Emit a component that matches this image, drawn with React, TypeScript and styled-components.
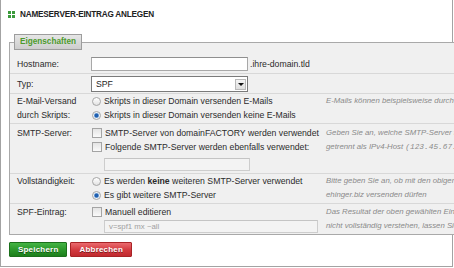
import React from "react";
import styled, { createGlobalStyle } from "styled-components";

const Global = createGlobalStyle`
  html, body { margin: 0; padding: 0; background: #fff; overflow: hidden; }
  body {
    width: 454px; height: 268px;
    font-family: "Liberation Sans", Arial, sans-serif;
    color: #2b2b2b;
  }
`;

const Page = styled.div`
  box-sizing: border-box;
  width: 453px;
  height: 267px;
  border: 1px solid #a3a3a3;
  border-top: none;
  display: flex;
  flex-direction: column;
`;

const Header = styled.div`
  display: flex;
  align-items: center;
  gap: 5px;
  height: 12px;
  margin: 8px 0 0 7px;
`;

const Icon = styled.span`
  display: grid;
  grid-template-columns: 3px 3px;
  grid-template-rows: 3px 3px;
  gap: 1px;
  & > i { background: #3b9a3b; display: block; }
`;

const Title = styled.h1`
  margin: 0;
  font-size: 8.2px;
  font-weight: bold;
  color: #222;
  letter-spacing: -0.2px;
  white-space: nowrap;
`;

const Fieldset = styled.section`
  position: relative;
  box-sizing: border-box;
  margin: 22px 0 0 8px;
  width: 480px;
  border: 1px solid #a9a9a9;
  background: #f0f0f0;
  padding-top: 8px;
`;

const Legend = styled.div`
  position: absolute;
  top: -9px;
  left: 4px;
  box-sizing: border-box;
  height: 16px;
  padding: 0 5px;
  border: 1px solid #9d9d9d;
  background: linear-gradient(#e6e6e6, #cdcdcd);
  color: #4c9a2c;
  font-size: 8.2px;
  font-weight: bold;
  line-height: 14px;
`;

const Row = styled.div<{ $pad?: string; $center?: boolean }>`
  display: grid;
  grid-template-columns: 74px 235px 1fr;
  align-items: ${(p) => (p.$center ? "center" : "start")};
  padding: ${(p) => p.$pad ?? "1px 0"};
  padding-left: 7px;
  border-bottom: 1px solid #d8d8d8;
  font-size: 8.7px;
  line-height: 14px;
  &:last-child { border-bottom: none; }
`;

const Label = styled.div`
  color: #2b2b2b;
  white-space: nowrap;
`;

const Control = styled.div`
  display: flex;
  flex-direction: column;
`;

const Inline = styled.div`
  display: flex;
  align-items: center;
`;

const TextInput = styled.div<{ $w: number; $disabled?: boolean }>`
  box-sizing: border-box;
  width: ${(p) => p.$w}px;
  height: ${(p) => (p.$disabled ? 13 : 14)}px;
  border: 1px solid ${(p) => (p.$disabled ? "#cdcdcd" : "#a8a8a8")};
  border-top-color: ${(p) => (p.$disabled ? "#c4c4c4" : "#8f8f8f")};
  background: ${(p) => (p.$disabled ? "#f3f3f3" : "#fff")};
  color: #a0a0a0;
  font-size: 7.8px;
  line-height: 11px;
  padding-left: 4px;
`;

const Suffix = styled.span`
  margin-left: 2px;
`;

const Select = styled.div`
  box-sizing: border-box;
  width: 157px;
  height: 16px;
  border: 1px solid #7a7a7a;
  background: #fff;
  display: flex;
  align-items: center;
  justify-content: space-between;
  padding: 0 1px 0 4px;
  color: #1d1d1d;
`;

const ArrowBtn = styled.span`
  box-sizing: border-box;
  width: 11px;
  height: 11px;
  border: 1px solid #b9b9b9;
  background: linear-gradient(#f4f4f4, #dedede);
  display: flex;
  align-items: center;
  justify-content: center;
  &::after {
    content: "";
    border-left: 3px solid transparent;
    border-right: 3px solid transparent;
    border-top: 3px solid #111;
  }
`;

const Option = styled.label`
  display: flex;
  align-items: center;
  gap: 3px;
  height: 14px;
  white-space: nowrap;
  padding-left: 1px;
`;

const Radio = styled.span<{ $on?: boolean }>`
  box-sizing: border-box;
  width: 9px;
  height: 9px;
  border-radius: 50%;
  border: 1px solid #a6a6a6;
  background: ${(p) =>
    p.$on
      ? "radial-gradient(circle, #1f5fb0 0 1.6px, #7fa9d9 2.2px, #eef2f7 3px)"
      : "linear-gradient(#ffffff, #e2e2e2)"};
`;

const Check = styled.span`
  box-sizing: border-box;
  width: 10px;
  height: 10px;
  border: 1px solid #a4a4a4;
  background: linear-gradient(#e4e4e4, #fafafa);
`;

const Indented = styled.div<{ $mt: number }>`
  margin: ${(p) => p.$mt}px 0 0 13px;
`;

const Help = styled.div`
  font-size: 7.8px;
  font-style: italic;
  color: #8a8a8a;
  white-space: nowrap;
  line-height: 14px;
  & code {
    font-family: "Liberation Mono", monospace;
    font-style: italic;
    font-size: 7.8px;
  }
`;

const Buttons = styled.div`
  display: flex;
  gap: 3px;
  margin: 7px 0 0 8px;
`;

const Button = styled.button<{ $tone: "green" | "red" }>`
  box-sizing: border-box;
  height: 15px;
  padding: 0 8px;
  border: 1px solid ${(p) => (p.$tone === "green" ? "#1b701b" : "#a82326")};
  border-radius: 1px;
  background: ${(p) =>
    p.$tone === "green"
      ? "linear-gradient(#44b444, #2a962a 55%, #1b7f1b)"
      : "linear-gradient(#ea6a6e, #d2393e 55%, #c02a2f)"};
  color: #fff;
  font-family: "Liberation Sans", Arial, sans-serif;
  font-size: 8px;
  font-weight: bold;
  letter-spacing: 0.2px;
  line-height: 13px;
  text-shadow: 0 1px 0 rgba(0, 0, 0, 0.45);
`;

export default function App() {
  return (
    <>
      <Global />
      <Page>
        <Header>
          <Icon>
            <i />
            <i />
            <i />
            <i />
          </Icon>
          <Title>NAMESERVER-EINTRAG ANLEGEN</Title>
        </Header>

        <Fieldset>
          <Legend>Eigenschaften</Legend>

          <Row $center $pad="6px 0 2px">
            <Label>Hostname:</Label>
            <Inline>
              <TextInput $w={157} />
              <Suffix>.ihre-domain.tld</Suffix>
            </Inline>
          </Row>

          <Row $center $pad="2px 0 1px">
            <Label>Typ:</Label>
            <Select>
              <span>SPF</span>
              <ArrowBtn />
            </Select>
          </Row>

          <Row $pad="0 0 1px">
            <Label>
              E-Mail-Versand
              <br />
              durch Skripts:
            </Label>
            <Control>
              <Option>
                <Radio />
                Skripts in dieser Domain versenden E-Mails
              </Option>
              <Option>
                <Radio $on />
                Skripts in dieser Domain versenden keine E-Mails
              </Option>
            </Control>
            <Help>E-Mails können beispielsweise durch Kontaktformulare versendet werden.</Help>
          </Row>

          <Row $pad="2px 0 2px">
            <Label>SMTP-Server:</Label>
            <Control>
              <Option>
                <Check />
                SMTP-Server von domainFACTORY werden verwendet
              </Option>
              <Option>
                <Check />
                Folgende SMTP-Server werden ebenfalls verwendet:
              </Option>
              <Indented $mt={4}>
                <TextInput $w={146} $disabled />
              </Indented>
            </Control>
            <Help>
              Geben Sie an, welche SMTP-Server für Ihre Domain verwendet werden, jeweils durch Komma
              <br />
              getrennt als IPv4-Host <code>(123.45.67.89)</code>
            </Help>
          </Row>

          <Row $pad="0 0 1px">
            <Label>Vollständigkeit:</Label>
            <Control>
              <Option>
                <Radio />
                <span>
                  Es werden <b>keine</b> weiteren SMTP-Server verwendet
                </span>
              </Option>
              <Option>
                <Radio $on />
                Es gibt weitere SMTP-Server
              </Option>
            </Control>
            <Help>
              Bitte geben Sie an, ob mit den obigen Angaben alle Server erfasst sind, die E-Mails für
              <br />
              ehinger.biz versenden dürfen
            </Help>
          </Row>

          <Row $pad="1px 0 1px">
            <Label>SPF-Eintrag:</Label>
            <Control>
              <Option>
                <Check />
                Manuell editieren
              </Option>
              <Indented $mt={1}>
                <TextInput $w={214} $disabled>
                  v=spf1 mx ~all
                </TextInput>
              </Indented>
            </Control>
            <Help>
              Das Resultat der oben gewählten Einstellungen. Sollten Sie diesen Eintrag
              <br />
              nicht vollständig verstehen, lassen Sie ihn bitte unverändert.
            </Help>
          </Row>
        </Fieldset>

        <Buttons>
          <Button $tone="green">Speichern</Button>
          <Button $tone="red">Abbrechen</Button>
        </Buttons>
      </Page>
    </>
  );
}
